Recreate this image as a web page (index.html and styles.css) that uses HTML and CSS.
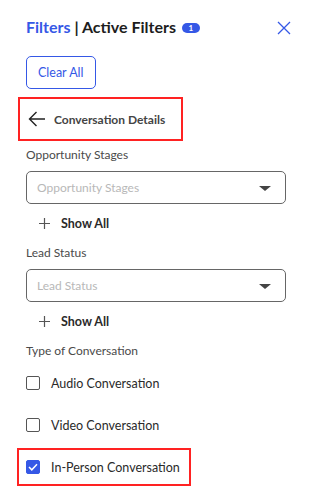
FILE: index.html
```html
<!DOCTYPE html>
<html lang="en">
<head>
    <meta charset="UTF-8">
    <meta name="viewport" content="width=device-width, initial-scale=1.0">
    <title>Filters</title>
    <link rel="stylesheet" href="styles.css">
</head>
<body>
    <div class="panel">
        <!-- Cabeçalho -->
        <div class="header">
            <div class="title"><span class="title-main">Filters</span> | Active Filters<span class="badge">1</span></div>
            <button class="btn-close" aria-label="Close">
                <svg width="14" height="14" viewBox="0 0 14 14">
                    <path d="M1 1 L13 13 M13 1 L1 13" stroke="#3558e6" stroke-width="1.3" fill="none"/>
                </svg>
            </button>
        </div>

        <button class="btn-clear">Clear All</button>

        <div class="back-row highlight">
            <svg width="18" height="16" viewBox="0 0 18 16">
                <path d="M17 8 H1.5 M8.5 1 L1.5 8 L8.5 15" stroke="#222" stroke-width="1.4" fill="none"/>
            </svg>
            <span>Conversation Details</span>
        </div>

        <!-- Opportunity Stages -->
        <div class="field">
            <div class="field-label">Opportunity Stages</div>
            <div class="select">
                <span class="placeholder">Opportunity Stages</span>
                <span class="caret"></span>
            </div>
            <div class="show-all">
                <svg width="11" height="11" viewBox="0 0 11 11">
                    <path d="M5.5 0 V11 M0 5.5 H11" stroke="#555" stroke-width="1.2" fill="none"/>
                </svg>
                <span>Show All</span>
            </div>
        </div>

        <!-- Lead Status -->
        <div class="field">
            <div class="field-label">Lead Status</div>
            <div class="select">
                <span class="placeholder">Lead Status</span>
                <span class="caret"></span>
            </div>
            <div class="show-all">
                <svg width="11" height="11" viewBox="0 0 11 11">
                    <path d="M5.5 0 V11 M0 5.5 H11" stroke="#555" stroke-width="1.2" fill="none"/>
                </svg>
                <span>Show All</span>
            </div>
        </div>

        <!-- Type of Conversation -->
        <div class="field">
            <div class="field-label">Type of Conversation</div>
            <div class="check-list">
                <label class="check-row">
                    <span class="box"></span>
                    <span>Audio Conversation</span>
                </label>
                <label class="check-row">
                    <span class="box"></span>
                    <span>Video Conversation</span>
                </label>
                <label class="check-row highlight">
                    <span class="box checked">
                        <svg width="10" height="8" viewBox="0 0 10 8">
                            <path d="M1 4 L3.8 6.8 L9 1.2" stroke="#fff" stroke-width="1.5" fill="none"/>
                        </svg>
                    </span>
                    <span>In-Person Conversation</span>
                </label>
            </div>
        </div>
    </div>
</body>
</html>
```
FILE: styles.css
```css
body {
    margin: 0;
    background: #fff;
    font-family: Lato, "Noto Sans", sans-serif;
    color: #4a4a4a;
}
.panel {
    padding: 16px 26px 0 26px;
    display: flex;
    flex-direction: column;
    align-items: flex-start;
}
.header {
    display: flex;
    justify-content: space-between;
    align-items: center;
    height: 22px;
    width: 100%;
}
.title {
    font-size: 16px;
    line-height: 22px;
    font-weight: bold;
    color: #1d1d1d;
}
.title-main {
    color: #3558e6;
}
.badge {
    display: inline-block;
    vertical-align: 2px;
    margin-left: 6px;
    width: 18px;
    height: 10px;
    border-radius: 5px;
    background: #3558e6;
    color: #fff;
    font-size: 8px;
    line-height: 10px;
    text-align: center;
}
.btn-close {
    background: none;
    border: none;
    padding: 0;
    margin-right: -5px;
    margin-top: 2px;
    width: 14px;
    height: 14px;
    cursor: pointer;
}
.btn-close svg {
    display: block;
}
.btn-clear {
    margin-top: 18px;
    height: 33px;
    padding: 0 11px;
    border: 1px solid #3558e6;
    border-radius: 5px;
    background: #fff;
    color: #3558e6;
    font-family: inherit;
    font-size: 12.5px;
    cursor: pointer;
}
.highlight {
    border: 2px solid #ff2222 !important;
}
.back-row {
    box-sizing: border-box;
    margin-top: 8px;
    margin-left: -8px;
    height: 44px;
    padding: 0 16px 0 8px;
    display: flex;
    align-items: center;
    gap: 8px;
    font-size: 12px;
    font-weight: bold;
    color: #444;
}
.back-row svg {
    display: block;
}
.field {
    width: 100%;
    margin-top: 5px;
}
.field + .field {
    margin-top: 10px;
}
.field-label {
    font-size: 12px;
    line-height: 18px;
    color: #4a4a4a;
}
.select {
    box-sizing: border-box;
    margin-top: 7px;
    height: 33px;
    width: 100%;
    border: 1px solid #666;
    border-radius: 5px;
    padding: 0 14px 0 10px;
    display: flex;
    align-items: center;
    justify-content: space-between;
}
.placeholder {
    font-size: 12px;
    color: #b8b8b8;
}
.caret {
    width: 0;
    height: 0;
    border-left: 6px solid transparent;
    border-right: 6px solid transparent;
    border-top: 5px solid #444;
    margin-top: 1px;
}
.show-all {
    margin-top: 8px;
    height: 22px;
    padding-left: 13px;
    display: flex;
    align-items: center;
    gap: 11px;
    font-size: 12.5px;
    font-weight: bold;
    color: #2a2a2a;
}
.show-all svg {
    display: block;
}
.check-list {
    margin-top: 4px;
    display: flex;
    flex-direction: column;
    align-items: flex-start;
    gap: 4px;
}
.check-row {
    box-sizing: border-box;
    height: 38px;
    margin-left: -9px;
    padding: 0 9px 0 7px;
    border: 2px solid transparent;
    display: flex;
    align-items: center;
    gap: 11px;
    font-size: 12.5px;
    color: #2a2a2a;
}
.box {
    box-sizing: border-box;
    width: 14px;
    height: 14px;
    border: 1.5px solid #555;
    border-radius: 2px;
    display: flex;
    align-items: center;
    justify-content: center;
}
.box.checked {
    background: #3558e6;
    border-color: #3558e6;
}
.box svg {
    display: block;
}
```
